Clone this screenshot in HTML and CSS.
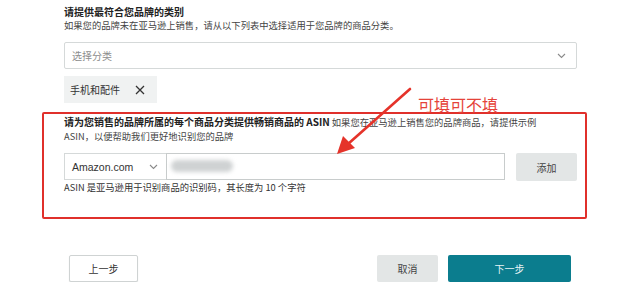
FILE: index.html
```html
<!DOCTYPE html>
<html lang="zh-CN">
<head>
    <meta charset="UTF-8">
    <title>品牌类别</title>
    <link rel="stylesheet" href="styles.css">
</head>
<body>
    <div class="page">
        <!-- Category -->
        <div class="section">
            <h3 class="title">请提供最符合您品牌的类别</h3>
            <p class="sub">如果您的品牌未在亚马逊上销售，请从以下列表中选择适用于您品牌的商品分类。</p>

            <div class="select-box">
                <span class="placeholder">选择分类</span>
                <svg class="chev" width="9" height="6" viewBox="0 0 9 6"><path d="M1 1 L4.5 4.5 L8 1" fill="none" stroke="#8a8a8a" stroke-width="1.1"/></svg>
            </div>

            <div class="tag">
                <span>手机和配件</span>
                <svg width="10" height="10" viewBox="0 0 10 10"><path d="M1 1 L9 9 M9 1 L1 9" stroke="#333" stroke-width="1.3"/></svg>
            </div>
        </div>

        <!-- ASIN -->
        <div class="section asin">
            <p class="asin-text"><b>请为您销售的品牌所属的每个商品分类提供畅销商品的 ASIN</b> 如果您在亚马逊上销售您的品牌商品，请提供示例 ASIN，以便帮助我们更好地识别您的品牌</p>

            <div class="asin-row">
                <div class="market">
                    <span>Amazon.com</span>
                    <svg width="9" height="6" viewBox="0 0 9 6"><path d="M1 1 L4.5 4.5 L8 1" fill="none" stroke="#8a8a8a" stroke-width="1.1"/></svg>
                </div>
                <div class="asin-input"><span class="blur"></span></div>
                <button class="btn btn-grey add">添加</button>
            </div>
            <p class="hint">ASIN 是亚马逊用于识别商品的识别码，其长度为 10 个字符</p>

            <!-- annotation -->
            <div class="mark-box"></div>
            <span class="mark-text">可填可不填</span>
            <svg class="mark-arrow" width="90" height="80" viewBox="0 0 90 80">
                <path d="M76 2 L14 57" stroke="#e5332a" stroke-width="2.6" stroke-linecap="round"/>
                <path d="M3 67 L9 49 L21 61 Z" fill="#e5332a"/>
            </svg>
        </div>

        <!-- Footer -->
        <div class="footer">
            <button class="btn btn-white">上一步</button>
            <div class="footer-right">
                <button class="btn btn-grey">取消</button>
                <button class="btn btn-teal">下一步</button>
            </div>
        </div>
    </div>
</body>
</html>
```

FILE: styles.css
```css
/* General */
body {
    margin: 0;
    background: #fff;
    color: #111;
    font-family: "Noto Sans CJK SC", "Liberation Sans", sans-serif;
}

.page {
    width: 513px;
    padding: 5px 0 0 64px;
}

p, h3 {
    margin: 0;
}

.title {
    font-size: 10px;
    line-height: 14px;
    font-weight: bold;
    color: #222;
}

.sub {
    font-size: 9.3px;
    line-height: 13px;
    color: #444;
}

/* Select */
.select-box {
    margin-top: 10px;
    height: 25px;
    border: 1px solid #d5d9d9;
    border-radius: 2px;
    display: flex;
    align-items: center;
    justify-content: space-between;
    padding: 0 10px 0 7px;
}

.placeholder {
    font-size: 10px;
    color: #8d8d8d;
}

.tag {
    margin-top: 7px;
    width: 93px;
    height: 27px;
    box-sizing: border-box;
    background: #f0f2f2;
    display: flex;
    align-items: center;
    gap: 15px;
    padding-left: 6px;
    font-size: 10px;
    color: #333;
}

/* ASIN */
.asin {
    position: relative;
    margin-top: 12px;
}

.asin-text {
    font-size: 9.3px;
    line-height: 14px;
    color: #444;
    padding-right: 24px;
}

.asin-text b {
    font-size: 10px;
    color: #222;
}

.asin-row {
    margin-top: 10px;
    display: flex;
    align-items: flex-start;
    gap: 11px;
}

.market {
    width: 102px;
    height: 27px;
    box-sizing: border-box;
    border: 1px solid #d5d9d9;
    border-right: none;
    display: flex;
    align-items: center;
    justify-content: space-between;
    padding: 0 8px 0 7px;
    font-family: "Liberation Sans", sans-serif;
    font-size: 10.5px;
    color: #333;
}

.asin-input {
    width: 339px;
    height: 27px;
    box-sizing: border-box;
    border: 1px solid #c8cccc;
    margin-left: -11px;
    padding: 6px 0 0 4px;
}

.blur {
    display: block;
    width: 62px;
    height: 12px;
    border-radius: 6px;
    background: #cfd2d3;
    filter: blur(2px);
}

.hint {
    font-size: 9.3px;
    line-height: 13px;
    color: #333;
}

/* Buttons */
.btn {
    height: 27px;
    border: none;
    border-radius: 2px;
    font-family: inherit;
    font-size: 10px;
    padding: 0;
}

.btn-grey {
    background: #e3e6e6;
    color: #444;
    width: 61px;
}

.add {
    height: 28px;
}

.btn-white {
    width: 69px;
    background: #fff;
    border: 1px solid #cfd3d3;
    box-shadow: 0 1px 1px rgba(0, 0, 0, 0.12);
    color: #333;
}

.btn-teal {
    width: 123px;
    background: #0b7d8e;
    color: #e8f4f6;
}

.footer {
    margin-top: 61px;
    padding-left: 5px;
    width: 502px;
    display: flex;
    justify-content: space-between;
}

.footer-right {
    display: flex;
    gap: 10px;
}

/* Annotation overlay */
.mark-box {
    position: absolute;
    left: -22px;
    top: -3px;
    width: 541px;
    height: 103px;
    border: 2px solid #e0302b;
    border-radius: 2px;
}

.mark-text {
    position: absolute;
    left: 354px;
    top: -21px;
    font-size: 16px;
    line-height: 20px;
    color: #e5433a;
}

.mark-arrow {
    position: absolute;
    left: 270px;
    top: -28px;
}
```
